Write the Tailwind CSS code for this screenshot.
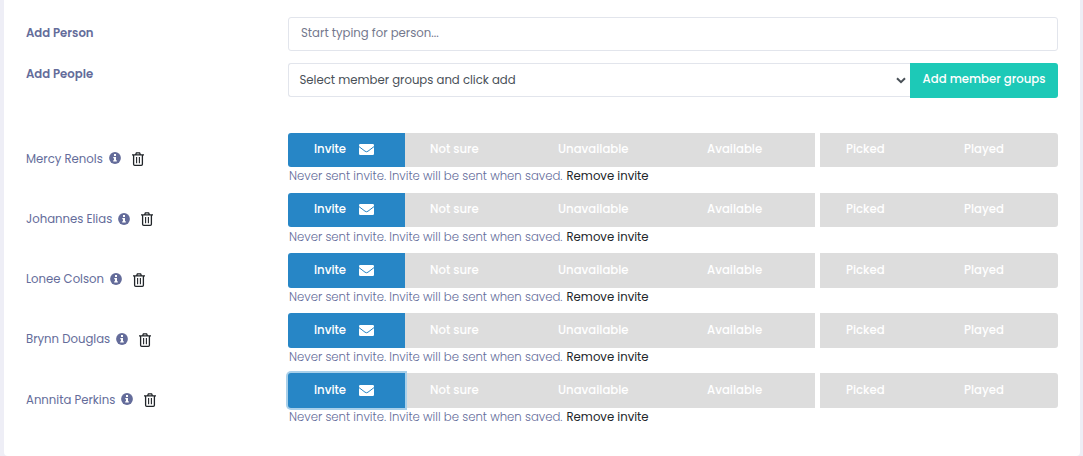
<!DOCTYPE html>
<html lang="en">

<head>
    <meta charset="UTF-8">
    <meta name="viewport" content="width=device-width, initial-scale=1.0">
    <title>Invite members</title>
    <script src="https://cdn.jsdelivr.net/npm/@tailwindcss/browser@4"></script>
</head>

<body class="bg-[#eeeef6] overflow-hidden">
    <div class="h-[456px] ml-1 mr-[3px] pl-[22px] pr-[22px] pt-[17px] bg-white rounded-b font-['Poppins','Inter',sans-serif] text-[11.7px] leading-[18px] text-[#646c9a]">
        <div class="flex h-[34px] mb-3">
            <label class="w-[262px] pt-[7px] font-semibold">Add Person</label>
            <input type="text" placeholder="Start typing for person..." class="flex-1 h-[34px] px-3 pb-0.5 border border-[#e2e5ec] rounded-[3px] outline-none placeholder:text-[#74788d]">
        </div>
        <div class="flex h-[35px]">
            <label class="w-[262px] pt-0.5 font-semibold">Add People</label>
            <div class="flex flex-1">
                <div class="flex flex-1 h-[34px] items-center justify-between pl-[10.5px] pr-1 border border-r-0 border-[#e2e5ec] rounded-l-[3px] text-[#495057]">
                    <span>Select member groups and click add</span>
                    <svg class="w-[10px] h-[7px]" viewBox="0 0 10 7" fill="none" stroke="#495057" stroke-width="2"><path d="M1 1.2l4 4 4-4" /></svg>
                </div>
                <button class="w-[148px] h-[35px] pb-[3px] rounded-r-[3px] bg-[#1dc9b7] text-white font-medium">Add member groups</button>
            </div>
        </div>
        <div id="members" class="pt-[34.8px]"></div>
    </div>

    <script>
        const members = [
            { name: 'Mercy Renols', size: 'w-[83px]' },
            { name: 'Johannes Elias', size: 'w-[92px]' },
            { name: 'Lonee Colson', size: 'w-[84px]' },
            { name: 'Brynn Douglas', size: 'w-[90px]' },
            { name: 'Annnita Perkins', size: 'w-[95px]' }
        ]

        const row = (m, focused) => `
            <div class="flex h-[60.15px]">
                <div class="flex w-[262px] h-[34.5px] pt-[17.2px] whitespace-nowrap">
                    <span class="${m.size}">${m.name}</span>
                    <svg class="w-3 h-3 mt-[2.5px]" viewBox="0 0 12 12"><circle cx="6" cy="6" r="5.9" fill="#646c9a" /><path d="M5 2h2v2H5zM4.3 5H7v3.2h.8v1.3H4.2V8.2H5V6.2h-.7z" fill="#fff" /></svg>
                    <svg class="w-3 h-[14px] ml-[11px] mt-[2.3px]" viewBox="0 0 12 14" fill="none" stroke="#212529"><path d="M0 2.8h12M3.6 2.8l.8-2h3.2l.8 2M1.6 3v9.2q0 1.1 1.1 1.1h6.6q1.1 0 1.1-1.1V3" stroke-width="1.3" /><path d="M4.6 5v6.2M7.4 5v6.2" stroke-width="1.1" /></svg>
                </div>
                <div class="w-[770px]">
                    <div class="flex h-[34.5px] text-white font-medium leading-[32px]">
                        <button class="flex w-[117px] pt-[0.45px] pl-[26px] bg-[#2786c6] rounded-l-[3px] ${focused ? 'relative ring-2 ring-[#a9d0ea]' : ''}">
                            <span class="w-[45px] text-left">Invite</span>
                            <svg class="w-[15px] h-[11px] mt-[11px]" viewBox="0 0 15 11"><rect width="15" height="11" rx="1.2" fill="#fff" /><path d="M0 2.6l6 4.6q1.5 1.1 3 0l6-4.6" fill="none" stroke="#2786c6" /></svg>
                        </button>
                        <button class="flex w-[127px] pt-[0.45px] pl-[25px] bg-[#ddd]">Not sure</button>
                        <button class="flex w-[149px] pt-[0.45px] pl-[26px] bg-[#ddd]">Unavailable</button>
                        <button class="flex w-[134px] pt-[0.45px] pl-[26px] bg-[#ddd]">Available</button>
                        <button class="flex w-[118px] pt-[0.45px] ml-[5px] pl-[26px] bg-[#ddd]">Picked</button>
                        <button class="flex w-[120px] pt-[0.45px] pl-[26px] bg-[#ddd] rounded-r-[3px]">Played</button>
                    </div>
                    <p class="flex pt-[0.15px] whitespace-nowrap"><span class="w-[278.5px] pl-px font-light">Never sent invite. Invite will be sent when saved.</span><a href="#" class="text-[#212529]">Remove invite</a></p>
                </div>
            </div>`

        document.getElementById('members').innerHTML = members.map((m, i) => row(m, i === 4)).join('')
    </script>
</body>

</html>
